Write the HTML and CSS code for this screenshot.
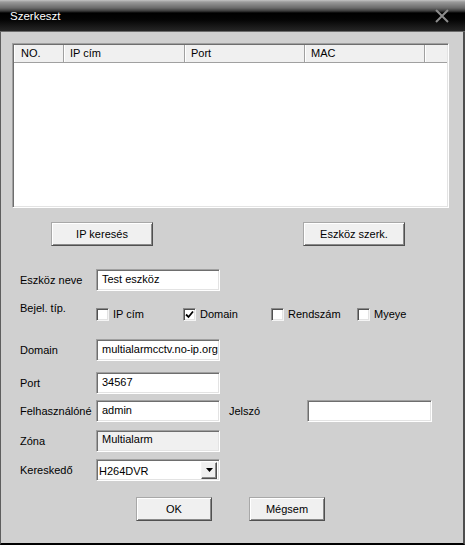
FILE: index.html
```html
<!DOCTYPE html>
<html lang="hu">
<head>
<meta charset="utf-8">
<title>Szerkeszt</title>
<link rel="stylesheet" href="styles.css">
</head>
<body>
<div class="window">
  <div class="titlebar">
    <span class="title">Szerkeszt</span>
    <svg class="close" width="14" height="14" viewBox="0 0 14 14"><path d="M1 1 L13 13 M13 1 L1 13" stroke="#8c8c8c" stroke-width="2" fill="none"/></svg>
  </div>
  <div class="body">
    <div class="list">
      <div class="list-head">
        <div class="col c-no">NO.</div>
        <div class="col c-ip">IP cím</div>
        <div class="col c-port">Port</div>
        <div class="col c-mac">MAC</div>
        <div class="col c-rest"></div>
      </div>
    </div>

    <div class="btn-row">
      <div class="btn btn-wide">IP keresés</div>
      <div class="btn btn-wide">Eszköz szerk.</div>
    </div>

    <div class="row r1">
      <div class="label">Eszköz neve</div>
      <div class="field">Test eszköz</div>
    </div>

    <div class="row r2">
      <div class="label label-top">Bejel. típ.</div>
      <div class="checks">
        <div class="check"><span class="box"></span><span>IP cím</span></div>
        <div class="check"><span class="box"><svg width="9" height="9" viewBox="0 0 9 9"><path d="M1 4.5 L3.5 7 L8 1.5" stroke="#000" stroke-width="1.8" fill="none"/></svg></span><span>Domain</span></div>
        <div class="check"><span class="box"></span><span>Rendszám</span></div>
        <div class="check"><span class="box"></span><span>Myeye</span></div>
      </div>
    </div>

    <div class="row r3">
      <div class="label">Domain</div>
      <div class="field field-clip">multialarmcctv.no-ip.org</div>
    </div>

    <div class="row r4">
      <div class="label">Port</div>
      <div class="field">34567</div>
    </div>

    <div class="row r5">
      <div class="label">Felhasználóné</div>
      <div class="field">admin</div>
      <div class="label label-pass">Jelszó</div>
      <div class="field field-pass"></div>
    </div>

    <div class="row r6">
      <div class="label">Zóna</div>
      <div class="field field-disabled">Multialarm</div>
    </div>

    <div class="row r7">
      <div class="label">Kereskedő</div>
      <div class="select">
        <span class="select-text">H264DVR</span>
        <span class="select-arrow"><svg width="7" height="4" viewBox="0 0 7 4"><path d="M0 0 H7 L3.5 4 Z" fill="#000"/></svg></span>
      </div>
    </div>

    <div class="actions">
      <div class="btn btn-small">OK</div>
      <div class="btn btn-small">Mégsem</div>
    </div>
  </div>
</div>
</body>
</html>
```

FILE: styles.css
```css
* { box-sizing: border-box; }

html, body {
  margin: 0;
  padding: 0;
}

body {
  font-family: "Liberation Sans", Arial, sans-serif;
  font-size: 11px;
  color: #000;
  background: #d0d0d0;
}

.window {
  width: 465px;
  height: 545px;
  display: flex;
  flex-direction: column;
}

.titlebar {
  height: 32px;
  flex: none;
  display: flex;
  align-items: center;
  justify-content: space-between;
  padding: 0 16px 0 10px;
  background: linear-gradient(#c4c4c4 0px, #9a9a9a 2px, #6a6a6a 8px, #3a3a3a 11px, #000 13px, #050505 20px, #262626 31px);
  border-bottom: 1px solid #6c6c6c;
}

.title {
  color: #fff;
  font-size: 11.5px;
  margin-top: 1px;
}

.close {
  display: block;
  margin-top: 1px;
}

.body {
  flex: 1;
  background: #d0d0d0;
  border-left: 1px solid #5e5e5e;
  border-right: 2px solid #4e4e4e;
  border-bottom: 2px solid #000;
}

/* list */
.list {
  margin: 11px 0 0 11px;
  width: 437px;
  height: 165px;
  background: #fff;
  border: 1px solid;
  border-color: #a0a0a0 #fff #fff #a0a0a0;
  box-shadow: inset 1px 1px 0 #6e6e6e, inset -1px -1px 0 #e3e3e3;
  padding: 1px 1px 0 1px;
}

.list-head {
  display: flex;
  height: 18px;
  background: #f0f0f0;
  border-bottom: 1px solid #a0a0a0;
}

.col {
  height: 100%;
  padding-left: 5px;
  line-height: 17px;
  border-left: 1px solid #fff;
  border-right: 1px solid #a0a0a0;
  white-space: nowrap;
}

.c-no { width: 50px; padding-left: 6px; }
.c-ip { width: 121px; }
.c-port { width: 120px; }
.c-mac { width: 120px; }
.c-rest { flex: 1; border-right: none; }

/* buttons */
.btn {
  height: 24px;
  display: flex;
  align-items: center;
  justify-content: center;
  background: #f0f0f0;
  border: 1px solid;
  border-color: #a8a8a8 #505050 #505050 #a8a8a8;
  box-shadow: inset 1px 1px 0 #fff, inset -1px -1px 0 #8a8a8a;
  padding-bottom: 1px;
}

.btn-row {
  display: flex;
  gap: 150px;
  margin: 14px 0 0 50px;
}

.btn-wide { width: 102px; }

.actions {
  display: flex;
  gap: 37px;
  margin: 16px 0 0 135px;
}

.btn-small { width: 76px; }

/* form rows */
.row {
  display: flex;
  align-items: center;
  height: 22px;
  padding-left: 19px;
}

.r1 { margin-top: 23px; }
.r2 { margin-top: 11px; align-items: flex-start; }
.r3 { margin-top: 15px; }
.r4 { margin-top: 11px; }
.r5 { margin-top: 6px; }
.r6 { margin-top: 8px; }
.r7 { margin-top: 7px; }

.label {
  width: 76px;
  flex: none;
  white-space: nowrap;
}

.label-top {
  line-height: 13px;
}

.label-pass {
  width: 78px;
  margin-left: 9px;
}

.field {
  width: 124px;
  height: 22px;
  flex: none;
  background: #fff;
  border: 1px solid;
  border-color: #a0a0a0 #fff #fff #a0a0a0;
  box-shadow: inset 1px 1px 0 #6e6e6e, inset -1px -1px 0 #e3e3e3;
  padding: 0 3px 0 5px;
  line-height: 19px;
  white-space: nowrap;
  overflow: hidden;
}

.field-clip {
  text-overflow: clip;
  padding-right: 2px;
}

.field-pass { width: 125px; }

.field-disabled {
  background: #f0f0f0;
  line-height: 17px;
}

/* checkboxes */
.checks {
  display: grid;
  grid-template-columns: 87px 88px 86px auto;
  height: 22px;
  align-items: center;
  padding-top: 2px;
}

.check {
  display: flex;
  align-items: center;
  gap: 4px;
}

.box {
  width: 13px;
  height: 13px;
  flex: none;
  background: #fff;
  border: 1px solid;
  border-color: #8a8a8a #f4f4f4 #f4f4f4 #8a8a8a;
  box-shadow: inset 1px 1px 0 #505050, inset -1px -1px 0 #e3e3e3;
  display: flex;
  align-items: center;
  justify-content: center;
}

.box svg { display: block; }

/* select */
.select {
  width: 124px;
  height: 22px;
  flex: none;
  display: flex;
  align-items: center;
  justify-content: space-between;
  background: #fff;
  border: 1px solid;
  border-color: #a0a0a0 #fff #fff #a0a0a0;
  box-shadow: inset 1px 1px 0 #6e6e6e, inset -1px -1px 0 #e3e3e3;
  padding: 0 2px 0 2px;
}

.select-text { padding-top: 2px; }

.select-arrow {
  width: 16px;
  height: 17px;
  display: flex;
  align-items: center;
  justify-content: center;
  background: #f0f0f0;
  border: 1px solid;
  border-color: #f4f4f4 #505050 #505050 #f4f4f4;
  box-shadow: inset -1px -1px 0 #8a8a8a;
}

.select-arrow svg { display: block; }
```
